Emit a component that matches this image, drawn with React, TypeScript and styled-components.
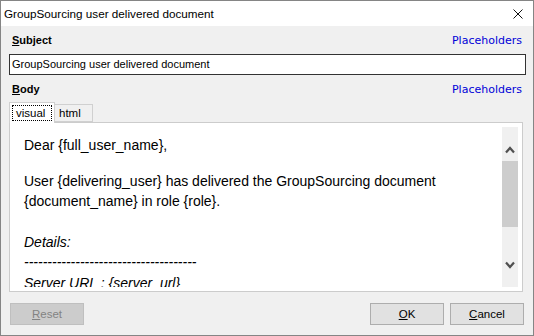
import styled, { createGlobalStyle } from "styled-components";

const GlobalStyle = createGlobalStyle`
  html, body {
    margin: 0;
    padding: 0;
    background: #f0f0f0;
  }
`;

const Window = styled.div`
  box-sizing: border-box;
  width: 534px;
  height: 336px;
  border: 1px solid #858585;
  background: #f0f0f0;
  display: flex;
  flex-direction: column;
  font-family: "Liberation Sans", Arial, sans-serif;
  overflow: hidden;
`;

const TitleBar = styled.div`
  height: 25px;
  background: #ffffff;
  display: flex;
  align-items: center;
  justify-content: space-between;
  padding: 0 10px 0 3px;
  font-size: 11.7px;
  color: #000;
`;

const CloseIcon = () => (
  <svg width="10" height="10" viewBox="0 0 10 10">
    <path d="M0.5 0.5 L9.5 9.5 M9.5 0.5 L0.5 9.5" stroke="#111" strokeWidth="1" />
  </svg>
);

const Content = styled.div`
  flex: 1;
  display: flex;
  flex-direction: column;
  padding: 0 7px 0 8px;
`;

const LabelRow = styled.div<{ $top: number }>`
  display: flex;
  justify-content: space-between;
  align-items: center;
  height: 14px;
  margin-top: ${(p) => p.$top}px;
  padding: 0 4px 0 3px;
`;

const FieldLabel = styled.span`
  font-size: 11px;
  font-weight: bold;
  color: #000;
`;

const LinkText = styled.span`
  font-family: "DejaVu Sans", Verdana, sans-serif;
  font-size: 11px;
  color: #0000d8;
`;

const SubjectInput = styled.div`
  box-sizing: border-box;
  margin-top: 7px;
  height: 21px;
  border: 1px solid #333;
  background: #fff;
  font-size: 11px;
  line-height: 19px;
  padding-left: 2px;
  color: #000;
`;

const TabRow = styled.div`
  display: flex;
  align-items: flex-end;
  margin-top: 6px;
  height: 20px;
  margin-right: 3px;
`;

const Tab = styled.div<{ $active?: boolean; $width: number }>`
  box-sizing: border-box;
  width: ${(p) => p.$width}px;
  height: ${(p) => (p.$active ? 21 : 18)}px;
  margin-bottom: ${(p) => (p.$active ? -1 : 0)}px;
  padding: ${(p) => (p.$active ? "2px 2px 0" : "0 0 0 4px")};
  border: 1px solid #d0d0d0;
  border-bottom: ${(p) => (p.$active ? "none" : "1px solid #d0d0d0")};
  border-left: ${(p) => (p.$active ? "1px solid #d0d0d0" : "none")};
  background: ${(p) => (p.$active ? "#fff" : "#f0f0f0")};
  font-size: 11.5px;
  line-height: 16px;
  color: #000;
  position: relative;
  z-index: 1;
`;

const FocusRect = styled.span`
  display: block;
  border: 1px dotted #000;
  padding: 0 3px;
  line-height: 14px;
`;

const Panel = styled.div`
  box-sizing: border-box;
  height: 170px;
  margin-right: 3px;
  border: 1px solid #cccccc;
  background: #fff;
  padding: 4px;
  display: flex;
`;

const Editor = styled.div`
  flex: 1;
  overflow: hidden;
  padding: 8px 0 0 10px;
  font-family: "Liberation Sans", Arial, sans-serif;
  font-size: 14px;
  line-height: 20.5px;
  color: #000;
`;

const Para = styled.p<{ $top?: number; $italic?: boolean }>`
  margin: ${(p) => p.$top ?? 0}px 0 0 0;
  font-style: ${(p) => (p.$italic ? "italic" : "normal")};
  white-space: nowrap;
`;

const ScrollBar = styled.div`
  width: 16px;
  background: #f0f0f0;
  display: flex;
  flex-direction: column;
`;

const ScrollButton = styled.div<{ $up?: boolean }>`
  box-sizing: border-box;
  height: 34px;
  display: flex;
  justify-content: center;
  align-items: ${(p) => (p.$up ? "flex-end" : "flex-start")};
  padding: ${(p) => (p.$up ? "0 0 7px" : "8px 0 0")};
`;

const Thumb = styled.div`
  height: 66px;
  background: #cdcdcd;
`;

const Track = styled.div`
  flex: 1;
`;

const Chevron = ({ up }: { up?: boolean }) => (
  <svg width="10" height="8" viewBox="0 0 10 8">
    <path
      d={up ? "M1 6.5 L5 2 L9 6.5" : "M1 1.5 L5 6 L9 1.5"}
      stroke="#505050"
      strokeWidth="2.2"
      fill="none"
    />
  </svg>
);

const Footer = styled.div`
  display: flex;
  align-items: center;
  margin-top: 11px;
  padding: 0 2px 0 1px;
  gap: 6px;
`;

const Spacer = styled.div`
  flex: 1;
`;

const Button = styled.div<{ $disabled?: boolean }>`
  box-sizing: border-box;
  width: 74px;
  height: 22px;
  border: 1px solid ${(p) => (p.$disabled ? "#bfbfbf" : "#adadad")};
  background: ${(p) => (p.$disabled ? "#cccccc" : "#e1e1e1")};
  color: ${(p) => (p.$disabled ? "#838383" : "#000")};
  font-size: 11.5px;
  display: flex;
  align-items: center;
  justify-content: center;
`;

export default function App() {
  return (
    <>
      <GlobalStyle />
      <Window>
        <TitleBar>
          <span>GroupSourcing user delivered document</span>
          <CloseIcon />
        </TitleBar>
        <Content>
          <LabelRow $top={7}>
            <FieldLabel>
              <u>S</u>ubject
            </FieldLabel>
            <LinkText>Placeholders</LinkText>
          </LabelRow>
          <SubjectInput>GroupSourcing user delivered document</SubjectInput>
          <LabelRow $top={7}>
            <FieldLabel>
              <u>B</u>ody
            </FieldLabel>
            <LinkText>Placeholders</LinkText>
          </LabelRow>
          <TabRow>
            <Tab $active $width={46}>
              <FocusRect>visual</FocusRect>
            </Tab>
            <Tab $width={38}>html</Tab>
          </TabRow>
          <Panel>
            <Editor>
              <Para>Dear {"{full_user_name}"},</Para>
              <Para $top={15}>
                User {"{delivering_user}"} has delivered the GroupSourcing document
                <br />
                {"{document_name}"} in role {"{role}"}.
              </Para>
              <Para $top={20} $italic>
                Details:
                <br />
                {"-------------------------------------"}
                <br />
                Server URL : {"{server_url}"}
              </Para>
            </Editor>
            <ScrollBar>
              <ScrollButton $up>
                <Chevron up />
              </ScrollButton>
              <Thumb />
              <Track />
              <ScrollButton>
                <Chevron />
              </ScrollButton>
            </ScrollBar>
          </Panel>
          <Footer>
            <Button $disabled>
              <span>
                <u>R</u>eset
              </span>
            </Button>
            <Spacer />
            <Button>
              <span>
                <u>O</u>K
              </span>
            </Button>
            <Button>
              <span>
                <u>C</u>ancel
              </span>
            </Button>
          </Footer>
        </Content>
      </Window>
    </>
  );
}
